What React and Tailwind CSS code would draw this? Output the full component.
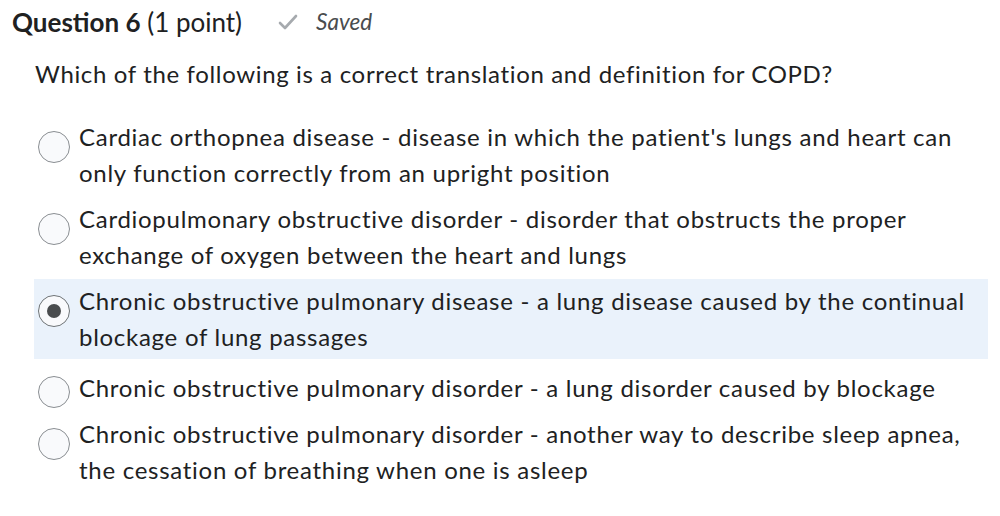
import React from 'react';

const options = [
  {
    text: "Cardiac orthopnea disease - disease in which the patient's lungs and heart can only function correctly from an upright position",
    selected: false
  },
  {
    text: 'Cardiopulmonary obstructive disorder - disorder that obstructs the proper exchange of oxygen between the heart and lungs',
    selected: false
  },
  {
    text: 'Chronic obstructive pulmonary disease - a lung disease caused by the continual blockage of lung passages',
    selected: true
  },
  {
    text: 'Chronic obstructive pulmonary disorder - a lung disorder caused by blockage',
    selected: false,
    single: true
  },
  {
    text: 'Chronic obstructive pulmonary disorder - another way to describe sleep apnea, the cessation of breathing when one is asleep',
    selected: false
  }
];

const Radio = ({ checked, single }) => (
  <span
    className={`flex h-[32px] w-[32px] flex-shrink-0 items-center justify-center rounded-full border bg-[#f9fafc] ${
      single ? 'mt-[6px] -mb-[2px]' : 'mt-[12px]'
    } ${checked ? 'border-[#6e7376]' : 'border-[#8a8e92]'}`}
  >
    {checked && <span className="h-[14px] w-[14px] rounded-full bg-[#494c4e]" />}
  </span>
);

const App = () => {
  return (
    <div className="min-h-[516px] w-[1000px] bg-white text-[#202122]" style={{ fontFamily: 'Lato, "Noto Sans", sans-serif' }}>
      <div className="flex items-center pl-[12px] pt-[5px]">
        <h2 className="text-[26px] leading-[34px]">
          <span className="font-bold">Question 6</span> (1 point)
        </h2>
        <svg className="ml-[36px]" width="20" height="20" viewBox="0 0 20 20" fill="none" stroke="#a6aaae" strokeWidth="2.6" strokeLinecap="round" strokeLinejoin="round">
          <path d="M2 11l5 5L18 4" />
        </svg>
        <span className="ml-[18px] text-[22.5px] italic text-[#494c4e]">Saved</span>
      </div>
      <p className="mt-[18px] pl-[35px] text-[24px] leading-[34px] tracking-[0.65px]">
        Which of the following is a correct translation and definition for COPD?
      </p>
      <div className="mt-[24px] flex flex-col gap-[2px] pl-[34px] pr-[12px]">
        {options.map((option, index) => (
          <label
            key={index}
            className={`flex items-start gap-[9px] py-[4px] pl-[4px] pr-[10px] ${option.selected ? 'mb-[5px] bg-[#eaf2fb]' : ''}`}
          >
            <Radio checked={option.selected} single={option.single} />
            <span className="text-[24px] leading-[36px] tracking-[0.72px]">{option.text}</span>
          </label>
        ))}
      </div>
    </div>
  );
};

export default App;
